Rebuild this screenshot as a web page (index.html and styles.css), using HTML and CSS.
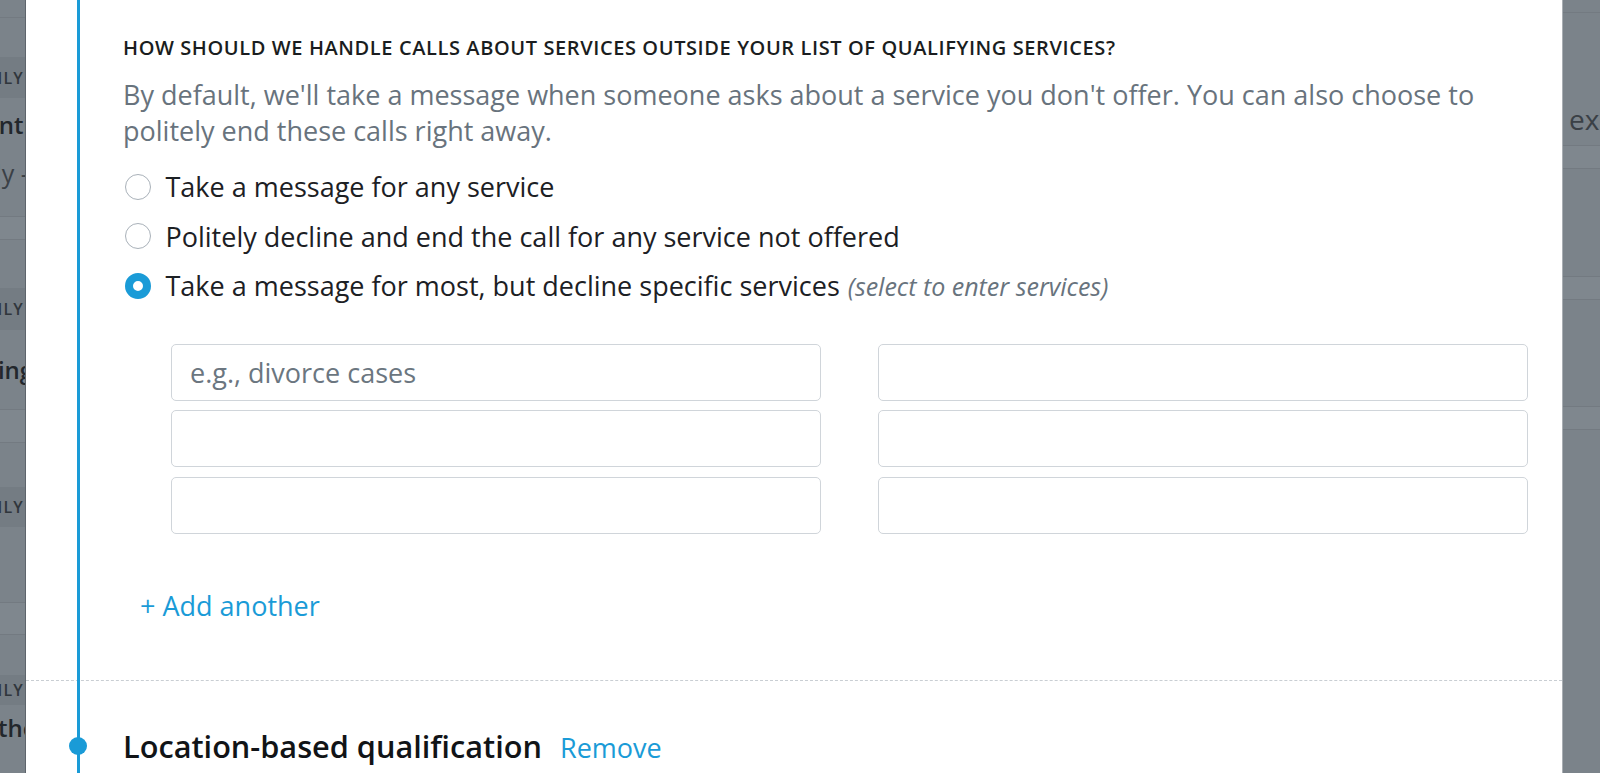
FILE: index.html
```html
<!DOCTYPE html>
<html lang="en">
<head>
<meta charset="utf-8">
<title>Qualifying services</title>
<link rel="stylesheet" href="styles.css">
</head>
<body>
<div class="page">
  <aside class="backdrop backdrop-left">
    <div class="bd-row bd-h18 bd-line"></div>
    <div class="bd-row bd-h39"></div>
    <div class="bd-row bd-label bd-h41"><span>ONLY</span></div>
    <div class="bd-row bd-title bd-h52"><span class="bd-cut1">Potential clients</span></div>
    <div class="bd-row bd-sub bd-h46"><span class="bd-cut2">Daily - all</span></div>
    <div class="bd-row bd-h21 bd-line"></div>
    <div class="bd-row bd-h23 bd-line bd-band"></div>
    <div class="bd-row bd-h48"></div>
    <div class="bd-row bd-label bd-h42"><span>ONLY</span></div>
    <div class="bd-row bd-title bd-h80 bd-line"><span class="bd-cut3">Billing</span></div>
    <div class="bd-row bd-h33 bd-line bd-band"></div>
    <div class="bd-row bd-h44"></div>
    <div class="bd-row bd-label bd-h40"><span>ONLY</span></div>
    <div class="bd-row bd-h76 bd-line"></div>
    <div class="bd-row bd-h32 bd-line bd-band"></div>
    <div class="bd-row bd-h40"></div>
    <div class="bd-row bd-label bd-h30"><span>ONLY</span></div>
    <div class="bd-row bd-title bd-h44"><span class="bd-cut4">Other</span></div>
  </aside>

  <main class="modal">
    <section class="question">
      <h3 class="q-title">HOW SHOULD WE HANDLE CALLS ABOUT SERVICES OUTSIDE YOUR LIST OF QUALIFYING SERVICES?</h3>
      <p class="q-desc">By default, we'll take a message when someone asks about a service you don't offer. You can also choose to politely end these calls right away.</p>

      <div class="options">
        <label class="option"><span class="radio"></span><span class="opt-text">Take a message for any service</span></label>
        <label class="option"><span class="radio"></span><span class="opt-text">Politely decline and end the call for any service not offered</span></label>
        <label class="option"><span class="radio checked"></span><span class="opt-text">Take a message for most, but decline specific services <em class="hint">(select to enter services)</em></span></label>
      </div>

      <div class="service-grid">
        <div class="field"><span class="placeholder">e.g., divorce cases</span></div>
        <div class="field"></div>
        <div class="field"></div>
        <div class="field"></div>
        <div class="field"></div>
        <div class="field"></div>
      </div>

      <a class="add-link">+ Add another</a>
    </section>

    <hr class="divider">

    <section class="next">
      <h2 class="next-title">Location-based qualification</h2>
      <a class="remove-link">Remove</a>
    </section>
  </main>

  <aside class="backdrop backdrop-right">
    <div class="bdr-row bdr-h13 bdr-line"></div>
    <div class="bdr-row bdr-text"><span>ex</span></div>
    <div class="bdr-row bdr-h23 bdr-line bdr-band"></div>
    <div class="bdr-row bdr-h108 bdr-line"></div>
    <div class="bdr-row bdr-h23 bdr-line bdr-band"></div>
    <div class="bdr-row bdr-h107 bdr-line"></div>
    <div class="bdr-row bdr-h23 bdr-line bdr-band"></div>
  </aside>
</div>
</body>
</html>
```

FILE: styles.css
```css
* { box-sizing: border-box; }

html, body {
  margin: 0;
  padding: 0;
  height: 100%;
}

body {
  font-family: "Open Sans", "Liberation Sans", sans-serif;
  background: #7b838a;
  overflow: hidden;
}

.page {
  display: flex;
  width: 1600px;
  height: 773px;
}

/* ---------- backdrop strips ---------- */
.backdrop {
  background: #7b838a;
  overflow: hidden;
  display: flex;
  flex-direction: column;
  flex: none;
  color: #2b3036;
}

.backdrop-left {
  width: 26px;
}

.bd-row {
  display: flex;
  justify-content: flex-start;
  align-items: center;
  white-space: nowrap;
  flex: none;
}

.bd-line { border-bottom: 1px solid #737a81; }
.bd-band { background: #7f878e; }

.bd-h18 { height: 18px; }
.bd-h21 { height: 21px; }
.bd-h23 { height: 23px; }
.bd-h30 { height: 30px; }
.bd-h32 { height: 32px; }
.bd-h33 { height: 33px; }
.bd-h39 { height: 39px; }
.bd-h40 { height: 40px; }
.bd-h41 { height: 41px; }
.bd-h42 { height: 42px; }
.bd-h44 { height: 44px; }
.bd-h46 { height: 46px; }
.bd-h48 { height: 48px; }
.bd-h52 { height: 52px; }
.bd-h76 { height: 76px; }
.bd-h80 { height: 80px; }

.bd-label {
  justify-content: flex-end;
  background: #747c83;
  font-size: 16px;
  font-weight: 600;
  letter-spacing: 1.2px;
  color: #30363c;
}
.bd-label span { margin-right: 2px; }

.bd-title {
  font-size: 24px;
  font-weight: 600;
  color: #22272c;
}
.bd-sub {
  font-size: 25px;
  color: #3a4046;
}
/* backdrop text is cut by the modal edge: shift each fragment */
.bd-cut1 { margin-left: -54px; }
.bd-cut2 { margin-left: -43px; }
.bd-cut3 { margin-left: -38px; }
.bd-cut4 { margin-left: -21px; }

.backdrop-right {
  width: 38px;
  border-left: 1.5px solid #a9aeb3;
}

.bdr-row { flex: none; }
.bdr-line { border-bottom: 1px solid #737a81; }
.bdr-band { background: #7f878e; }
.bdr-h13 { height: 13px; }
.bdr-h23 { height: 23px; }
.bdr-h107 { height: 107px; }
.bdr-h108 { height: 108px; }
.bdr-text {
  height: 133px;
  display: flex;
  align-items: center;
  padding-left: 6px;
  padding-top: 79px;
  font-size: 28px;
  color: #3a4046;
  white-space: nowrap;
  border-bottom: 1px solid #737a81;
}

/* ---------- modal ---------- */
.modal {
  position: relative;
  flex: 1 1 auto;
  background: #ffffff;
  padding-top: 35px;
  box-shadow: -1px 0 0 #5e656c;
}

.modal::before {
  content: "";
  position: absolute;
  left: 51px;
  top: 0;
  bottom: 0;
  width: 3px;
  background: #1a9bd7;
  z-index: 2;
}

.question {
  padding: 0 34px 0 97px;
}

.q-title {
  margin: 0;
  font-size: 20px;
  line-height: 26px;
  font-weight: 600;
  letter-spacing: 0.6px;
  color: #1a1d20;
}

.q-desc {
  margin: 16px 0 0;
  font-size: 27px;
  line-height: 36px;
  color: #68737d;
}

.options {
  display: flex;
  flex-direction: column;
  margin-top: 13px;
}

.option {
  display: flex;
  align-items: center;
  height: 49.5px;
  font-size: 27px;
  color: #1c2024;
}

.radio {
  width: 26px;
  height: 26px;
  margin-left: 1.5px;
  margin-right: 15px;
  border-radius: 50%;
  border: 1.5px solid #a9b1b9;
  flex: none;
  background: #fff;
}

.radio.checked {
  border: 8.5px solid #1a9bd7;
}

.hint {
  font-size: 25px;
  color: #68737d;
  margin-left: 1px;
}

.service-grid {
  display: grid;
  grid-template-columns: 1fr 1fr;
  column-gap: 57px;
  row-gap: 9.5px;
  margin-top: 33px;
  margin-left: 48px;
}

.field {
  height: 57px;
  border: 1.5px solid #d0d5da;
  border-radius: 5px;
  display: flex;
  align-items: center;
  padding-left: 18px;
}

.placeholder {
  font-size: 27px;
  color: #6b7680;
}

.add-link {
  display: inline-block;
  margin-top: 54px;
  margin-left: 17px;
  font-size: 27px;
  line-height: 36px;
  color: #1a9bd7;
}

.divider {
  margin: 56px 0 0;
  border: 0;
  border-top: 1.5px dashed #c9ced3;
}

.next {
  display: flex;
  align-items: baseline;
  gap: 18px;
  padding: 45px 34px 0 97px;
}

.next-title {
  margin: 0;
  font-size: 30.7px;
  line-height: 40px;
  font-weight: 600;
  color: #111417;
  position: relative;
}

.next-title::before {
  content: "";
  position: absolute;
  left: -54px;
  top: 11px;
  width: 18px;
  height: 18px;
  border-radius: 50%;
  background: #1a9bd7;
  z-index: 3;
}

.remove-link {
  font-size: 27px;
  color: #1a9bd7;
}
```
